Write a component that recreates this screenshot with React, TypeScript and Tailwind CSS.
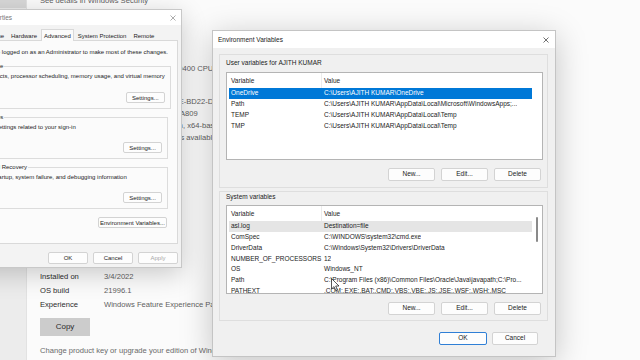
import type { ReactNode } from 'react'

const USER_VARS: [string, string][] = [
  ['OneDrive', 'C:\\Users\\AJITH KUMAR\\OneDrive'],
  ['Path', 'C:\\Users\\AJITH KUMAR\\AppData\\Local\\Microsoft\\WindowsApps;...'],
  ['TEMP', 'C:\\Users\\AJITH KUMAR\\AppData\\Local\\Temp'],
  ['TMP', 'C:\\Users\\AJITH KUMAR\\AppData\\Local\\Temp'],
]
const SYS_VARS: [string, string][] = [
  ['asl.log', 'Destination=file'],
  ['ComSpec', 'C:\\WINDOWS\\system32\\cmd.exe'],
  ['DriverData', 'C:\\Windows\\System32\\Drivers\\DriverData'],
  ['NUMBER_OF_PROCESSORS', '12'],
  ['OS', 'Windows_NT'],
  ['Path', 'C:\\Program Files (x86)\\Common Files\\Oracle\\Java\\javapath;C:\\Pro...'],
  ['PATHEXT', '.COM;.EXE;.BAT;.CMD;.VBS;.VBE;.JS;.JSE;.WSF;.WSH;.MSC'],
]

function CloseX({ color = '#333' }: { color?: string }) {
  return (
    <svg width="6" height="6" viewBox="0 0 6 6" className="shrink-0">
      <path d="M0.5 0.5L5.5 5.5M5.5 0.5L0.5 5.5" stroke={color} strokeWidth="0.7" />
    </svg>
  )
}

function Btn({ children, className = '', primary = false, disabled = false }: { children: ReactNode; className?: string; primary?: boolean; disabled?: boolean }) {
  return (
    <button className={`flex items-center justify-center rounded-[2px] border bg-[#fdfdfd] leading-none ${primary ? 'border-[#2f7fd6]' : 'border-[#d3d3d3]'} ${disabled ? 'text-[#a8a8a8]' : 'text-[#1b1b1b]'} ${className}`}>
      {children}
    </button>
  )
}

function VarList({ rows, selected, hover, scrollbar = false, className = '' }: { rows: [string, string][]; selected?: number; hover?: number; scrollbar?: boolean; className?: string }) {
  return (
    <div className={`flex overflow-hidden border border-[#b4b4b4] bg-white ${className}`}>
      <div className="w-[305px] shrink-0 overflow-hidden pl-[2px]">
        <div className="flex h-[15px] items-center text-[#1b1b1b]">
          <div className="flex h-full w-[93px] items-center border-r border-[#ececec] pl-[2px]">Variable</div>
          <div className="pl-[2px]">Value</div>
        </div>
        {rows.map(([k, v], i) => (
          <div key={k + i} className={`flex h-[10.7px] w-[303px] items-center whitespace-nowrap ${i === selected ? 'bg-[#0078d7] text-white' : i === hover ? 'bg-[#e5e5e5] text-[#1b1b1b]' : 'text-[#1b1b1b]'}`}>
            <div className="w-[93px] shrink-0 overflow-hidden pl-[2px]">{k}</div>
            <div className="overflow-hidden pl-[2px]">{v}</div>
          </div>
        ))}
      </div>
      {scrollbar && (
        <div className="flex-1 pl-[4px] pt-[11px]">
          <div className="h-[25px] w-[2px] rounded-full bg-[#8a8a8a]" />
        </div>
      )}
    </div>
  )
}

function EnvVars() {
  return (
    <div className="absolute left-[212px] top-[30px] flex h-[327px] w-[344px] flex-col border border-[#c4c4c4] bg-[#f0f0f0] text-[6.5px] shadow-[0_6px_30px_rgba(0,0,0,0.22)]">
      <div className="flex h-[17px] items-center justify-between bg-white pl-[5px] pr-[6px] text-[#1b1b1b]">
        <span>Environment Variables</span>
        <CloseX />
      </div>

      <div className="mt-[6px] ml-[6px] mr-[7px] border border-[#dedede] pb-[6px] pl-[6px] pr-[4px] pt-[4px]">
        <div className="h-[8px] leading-[8px] text-[#1b1b1b]">User variables for AJITH KUMAR</div>
        <VarList rows={USER_VARS} selected={0} className="mt-[5px] h-[88px]" />
        <div className="mt-[8px] flex justify-end gap-[6px] pr-[2px]">
          <Btn className="h-[13px] w-[47px]">New...</Btn>
          <Btn className="h-[13px] w-[47px]">Edit...</Btn>
          <Btn className="h-[13px] w-[47px]">Delete</Btn>
        </div>
      </div>

      <div className="mt-[3px] ml-[6px] mr-[7px] border border-[#dedede] pb-[5px] pl-[6px] pr-[4px] pt-[1px]">
        <div className="h-[8px] leading-[8px] text-[#1b1b1b]">System variables</div>
        <VarList rows={SYS_VARS} hover={0} scrollbar className="mt-[4px] h-[89px]" />
        <div className="mt-[8px] flex justify-end gap-[6px] pr-[2px]">
          <Btn className="h-[13px] w-[47px]">New...</Btn>
          <Btn className="h-[13px] w-[47px]">Edit...</Btn>
          <Btn className="h-[13px] w-[47px]">Delete</Btn>
        </div>
      </div>

      <div className="mt-[11px] flex justify-end gap-[5px] pr-[17px]">
        <Btn primary className="h-[13px] w-[48px]">OK</Btn>
        <Btn className="h-[13px] w-[46px]">Cancel</Btn>
      </div>
    </div>
  )
}

function Group({ title, text, children }: { title: string; text: string; children?: ReactNode }) {
  return (
    <fieldset className="ml-[7px] mr-[9px] border border-[#dcdcdc] pb-[5px] pr-[5px]">
      <legend className="ml-[5px] px-[1px] leading-[8px] text-[#1b1b1b]">{title}</legend>
      <div className="mt-[2px] h-[8px] whitespace-nowrap pl-[9px] leading-[8px]">{text}</div>
      {children}
    </fieldset>
  )
}

function SysProps() {
  const tabs = ['Computer Name', 'Hardware', 'Advanced', 'System Protection', 'Remote']
  return (
    <div className="absolute left-[-53px] top-[9px] flex h-[259px] w-[235px] flex-col border border-[#c8c8c8] bg-[#f3f3f3] text-[6px] text-[#1b1b1b] shadow-[0_6px_24px_rgba(0,0,0,0.2)]">
      <div className="flex h-[15px] items-center justify-between bg-white pl-[11px] pr-[5px] text-[6.5px] text-[#777]">
        <span>System Properties</span>
        <CloseX color="#888" />
      </div>
      <div className="flex h-[15px] items-end pl-[8.5px]">
        {tabs.map(t =>
          t === 'Advanced' ? (
            <div key={t} className="relative z-10 -mb-px flex h-[12px] items-start border border-b-0 border-[#d9d9d9] bg-[#fbfbfb] px-[2.5px] pt-[2px] leading-[8px]">{t}</div>
          ) : (
            <div key={t} className="flex h-[9px] items-center px-[3.5px] leading-[8px]">{t}</div>
          ),
        )}
      </div>
      <div className="ml-[6px] mr-[3px] flex h-[204px] flex-col border border-[#d9d9d9] bg-[#fbfbfb]">
        <div className="mt-[7px] h-[8px] whitespace-nowrap pl-[12px] leading-[8px]">You must be logged on as an Administrator to make most of these changes.</div>
        <div className="mt-[6px]">
          <Group title="Performance" text="Visual effects, processor scheduling, memory usage, and virtual memory">
            <div className="mt-[12px] flex justify-end"><Btn className="h-[11px] w-[39px]">Settings...</Btn></div>
          </Group>
        </div>
        <div className="mt-[4px]">
          <Group title="User Profiles" text="Desktop settings related to your sign-in">
            <div className="mt-[11px] flex justify-end"><Btn className="h-[11px] w-[39px]">Settings...</Btn></div>
          </Group>
        </div>
        <div className="mt-[4px]">
          <Group title="Startup and Recovery" text="System startup, system failure, and debugging information">
            <div className="mt-[11px] flex justify-end"><Btn className="h-[11px] w-[39px]">Settings...</Btn></div>
          </Group>
        </div>
        <div className="mt-[8px] flex justify-end pr-[10px]">
          <Btn className="h-[11px] w-[69px]">Environment Variables...</Btn>
        </div>
      </div>
      <div className="mt-[8px] flex justify-end gap-[5px] pr-[3px]">
        <Btn className="h-[12px] w-[40px]">OK</Btn>
        <Btn className="h-[12px] w-[40px]">Cancel</Btn>
        <Btn disabled className="h-[12px] w-[40px]">Apply</Btn>
      </div>
    </div>
  )
}

function Row({ label, value, className = '' }: { label: string; value: string; className?: string }) {
  return (
    <div className={`flex items-center whitespace-nowrap ${className}`}>
      <div className="w-[64px] shrink-0 text-[#2b2b2b]">{label}</div>
      <div className="text-[#5f5f5f]">{value}</div>
    </div>
  )
}

function Cursor() {
  return (
    <svg className="absolute left-[331px] top-[278px]" width="9" height="14" viewBox="0 0 9 14">
      <path d="M0.5 0.5V11L3 8.6L4.8 12.6L6.4 11.9L4.7 8H8Z" fill="white" stroke="#111" strokeWidth="0.7" strokeLinejoin="round" />
    </svg>
  )
}

export default function App() {
  return (
    <div className="relative h-[360px] w-[640px] overflow-hidden bg-[#fbfbfb] font-['Liberation_Sans',Arial,sans-serif]">
      <div className="flex h-full">
        <div className="w-[27px] shrink-0 border-r border-[#e2e2e2] bg-[#ececec]">
          <div className="h-[8px] bg-[#d8d8d8]" />
        </div>
        <div className="flex-1 pl-[13px] text-[7.6px]">
          <div className="-mt-[5px] flex h-[12px] items-center text-[#5f5f5f]">See details in Windows Security</div>
          <div className="flex h-[37px] items-end text-[9px] font-semibold text-[#2b2b2b]">Device specifications</div>
          <Row className="mt-[2px] h-[12px]" label="Device name" value="DESKTOP-AJITH" />
          <Row className="mt-[5px] h-[12px]" label="Processor" value="Intel(R) Core(TM) i5-10400 CPU @ 2.90GHz" />
          <Row className="h-[12px]" label="Installed RAM" value="16.0 GB" />
          <Row className="mt-[9px] h-[12px]" label="Device ID" value="8C2A1E4F-3B7D-4A9E-BD22-D1F3A5C7E9B0" />
          <Row className="h-[12px]" label="Product ID" value="00326-10000-00000-AA809" />
          <Row className="h-[12px]" label="System type" value="64-bit operating system, x64-based processor" />
          <Row className="h-[12px]" label="Pen and touch" value="No pen or touch input is available for this display" />
          <div className="flex h-[84px] items-end text-[9px] font-semibold text-[#2b2b2b]">Windows specifications</div>
          <Row className="mt-[14px] h-[14px]" label="Edition" value="Windows 11 Pro" />
          <Row className="h-[14px]" label="Version" value="Dev" />
          <Row className="h-[14px]" label="Installed on" value="3/4/2022" />
          <Row className="h-[14px]" label="OS build" value="21996.1" />
          <Row className="h-[14px]" label="Experience" value="Windows Feature Experience Pack 321.14700.0.3" />
          <button className="mt-[6px] flex h-[18px] w-[50px] items-center justify-center bg-[#cccccc] text-[8px] text-[#2b2b2b]">Copy</button>
          <div className="mt-[9px] flex h-[12px] items-center whitespace-nowrap text-[#6a6a6a]">Change product key or upgrade your edition of Windows</div>
        </div>
      </div>
      <SysProps />
      <EnvVars />
      <Cursor />
    </div>
  )
}
